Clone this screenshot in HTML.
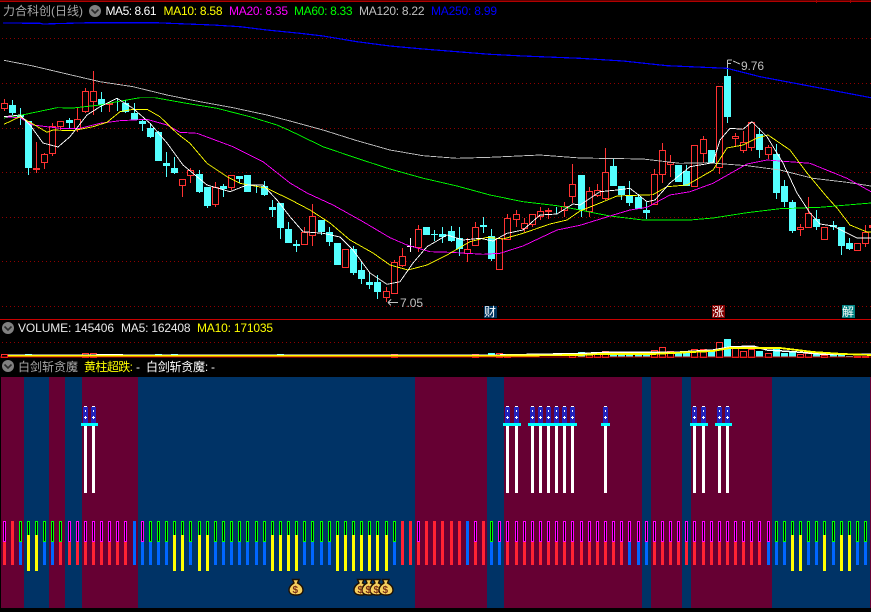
<!DOCTYPE html>
<html><head><meta charset="utf-8"><style>
html,body{margin:0;padding:0;background:#000;width:871px;height:612px;overflow:hidden}
svg{display:block}
text{font-family:"Liberation Sans","Noto Sans CJK SC",sans-serif;font-size:12px}
</style></head><body>
<svg width="871" height="612" viewBox="0 0 871 612" xmlns="http://www.w3.org/2000/svg" shape-rendering="crispEdges">
<rect width="871" height="612" fill="#000"/>
<rect y="0" width="871" height="1" fill="#600000"/><rect y="1" width="871" height="1" fill="#b00000"/>
<path d="M816.5 0V3M850.5 0V3" stroke="#a00000"/>
<rect y="319" width="871" height="1" fill="#c80000"/>
<path d="M2 38.5H871M2 83.5H871M2 128.5H871M2 172.5H871M2 217.5H871M2 261.5H871M2 306.5H871M2 342.5H871" stroke="#900000" stroke-dasharray="1 3"/>

<!-- candles red -->
<path stroke="#ff3232" d="M4.5 99V111M36.5 142V173M44.5 153V169M52.5 123V156M60.5 121V130M77.5 107V132M85.5 88V113M93.5 71V115M109.5 103V112M182.5 179V197M190.5 168V183M215.5 182V207M231.5 175V190M304.5 227V244M312.5 204V246M345.5 249V267M386.5 287V302M394.5 260V293M402.5 248V267M418.5 225V252M467.5 238V262M475.5 222V245M499.5 237V269M507.5 214V239M516.5 210V227M524.5 218V232M532.5 214V227M540.5 207V220M548.5 208V219M564.5 202V217M572.5 164V203M589.5 187V217M597.5 184V197M605.5 148V200M654.5 169V204M662.5 143V183M670.5 155V177M694.5 145V187M703.5 136V163M719.5 86V174M735.5 133V147M743.5 131V153M751.5 122V151M768.5 145V159M800.5 224V236M808.5 197V227M824.5 227V239M857.5 243V250M865.5 225V247"/>
<path fill="#000" stroke="#ff3232" d="M1.5 103.5h6v5h-6zM41.5 154.5h6v8h-6zM49.5 126.5h6v27h-6zM57.5 121.5h6v5h-6zM74.5 119.5h6v9h-6zM82.5 91.5h6v20h-6zM90.5 91.5h6v10h-6zM179.5 179.5h6v6h-6zM187.5 170.5h6v5h-6zM212.5 187.5h6v17h-6zM228.5 175.5h6v12h-6zM301.5 232.5h6v12h-6zM309.5 216.5h6v19h-6zM342.5 249.5h6v18h-6zM383.5 291.5h6v6h-6zM391.5 262.5h6v31h-6zM399.5 256.5h6v9h-6zM415.5 229.5h6v18h-6zM464.5 249.5h6v4h-6zM472.5 227.5h6v18h-6zM496.5 238.5h6v31h-6zM504.5 218.5h6v21h-6zM513.5 214.5h6v5h-6zM521.5 223.5h6v5h-6zM529.5 214.5h6v10h-6zM537.5 211.5h6v5h-6zM561.5 206.5h6v4h-6zM569.5 184.5h6v12h-6zM586.5 191.5h6v20h-6zM594.5 190.5h6v5h-6zM602.5 172.5h6v26h-6zM651.5 174.5h6v30h-6zM659.5 150.5h6v24h-6zM667.5 162.5h6v2h-6zM691.5 145.5h6v41h-6zM700.5 139.5h6v14h-6zM716.5 86.5h6v81h-6zM732.5 136.5h6v2h-6zM740.5 142.5h6v8h-6zM748.5 122.5h6v25h-6zM765.5 147.5h6v7h-6zM797.5 227.5h6v2h-6zM805.5 213.5h6v14h-6zM821.5 227.5h6v12h-6zM854.5 243.5h6v7h-6zM862.5 232.5h6v11h-6z"/>
<path fill="#ff3232" d="M33 168h7v2h-7zM106 103h7v2h-7zM545 210h7v2h-7zM869 225h2v3h-2z"/>
<!-- candles cyan -->
<path stroke="#54ffff" d="M12.5 100V115M20.5 108V125M28.5 121V175M69.5 118V129M101.5 92V112M117.5 99V111M125.5 100V113M134.5 103V120M142.5 120V131M150.5 123V138M158.5 131V161M166.5 152V177M174.5 157V174M199.5 170V193M207.5 187V208M223.5 184V197M239.5 176V183M256.5 185V193M264.5 181V196M272.5 200V217M280.5 203V239M288.5 222V243M296.5 240V252M321.5 220V235M329.5 227V246M353.5 246V275M361.5 262V284M369.5 273V289M377.5 275V299M434.5 230V241M442.5 227V243M451.5 226V242M459.5 227V256M483.5 217V233M491.5 229V261M556.5 207V214M581.5 175V217M613.5 159V186M621.5 186V200M629.5 181V206M638.5 194V209M646.5 202V219M686.5 165V186M727.5 60V123M759.5 128V158M776.5 144V199M784.5 180V207M792.5 200V233M816.5 210V230M833.5 221V230M841.5 227V255M849.5 238V250"/>
<path stroke="#fff" d="M410.5 238V252M407 246.5H414"/>
<path fill="#54ffff" d="M9 105h7v8h-7zM17 115h7v2h-7zM25 121h7v47h-7zM66 120h7v3h-7zM98 99h7v6h-7zM122 103h7v9h-7zM131 113h7v7h-7zM139 121h7v3h-7zM147 128h7v9h-7zM155 132h7v29h-7zM163 163h7v3h-7zM171 168h7v5h-7zM196 174h7v18h-7zM204 187h7v19h-7zM220 186h7v3h-7zM236 176h7v3h-7zM244 175h7v17h-7zM261 186h7v9h-7zM269 207h7v3h-7zM277 203h7v25h-7zM285 229h7v14h-7zM293 244h7v2h-7zM318 220h7v12h-7zM326 232h7v10h-7zM334 243h7v22h-7zM350 249h7v24h-7zM358 270h7v9h-7zM366 282h7v3h-7zM374 282h7v10h-7zM423 227h7v8h-7zM431 234h7v1h-7zM439 234h7v3h-7zM448 231h7v10h-7zM456 238h7v11h-7zM480 225h7v2h-7zM488 236h7v23h-7zM578 175h7v35h-7zM610 166h7v20h-7zM618 186h7v9h-7zM626 196h7v7h-7zM635 197h7v12h-7zM643 210h7v3h-7zM675 165h7v17h-7zM683 171h7v15h-7zM708 150h7v13h-7zM724 76h7v41h-7zM756 134h7v16h-7zM773 154h7v39h-7zM781 186h7v16h-7zM789 202h7v29h-7zM813 219h7v8h-7zM830 225h7v2h-7zM838 227h7v19h-7zM846 243h7v6h-7z"/>

<!-- moving averages -->
<g fill="none" stroke-width="0.9">
<polyline stroke="#0000ff" stroke-width="1.2" points="3,23 40,23.3 43,24 90,22.7 155,22.7 187,24 213,25 240,26.7 267,30 290,32.3 300,33.3 323,36 357,41.7 390,46 423,49 457,51.7 490,54.3 523,56 580,58.3 623,61 667,65.7 727,68.3 760,76.7 813,86.7 871,97.7"/>
<polyline stroke="#c0c0c0" points="4,60.3 33,66 67,74 100,81.7 133,86.7 167,95 200,101.7 233,107.7 267,115 290,121 323,130 357,140.7 390,150 423,155.7 457,158.3 490,157.3 540,155 580,158 643,159 680,163.3 707,162.7 747,165.7 780,170 813,178.3 847,182.3 871,186"/>
<polyline stroke="#00ff00" points="4,118 27,114 57,107.7 73,108 100,105 117,101.7 140,97.7 155,97.7 183,102.7 217,108.3 250,116.7 277,125 290,130.7 323,146.7 357,158.3 390,169 423,178.2 457,186 490,195 523,201.7 557,205.7 580,210 593,212.7 610,216 643,220 690,220 713,218 747,212.7 780,208.7 820,207.3 871,203"/>
<polyline stroke="#ff00ff" points="4,116.7 20,117.7 33,125 60,128.3 80,128.3 100,123.3 120,120.7 147,119.3 167,125 180,132.3 197,133.3 233,146.7 263,161.7 290,183 307,193 333,205 363,221.7 390,237.7 407,245 430,251.7 450,252.3 483,254.3 500,253.3 523,246 557,230 580,225.3 610,216 630,210 647,207.3 670,195 690,191.7 713,183.3 747,164 767,160 810,163.3 847,178.3 871,191.7"/>
<polyline stroke="#ffff00" points="4,124.3 20,116.7 33,124 47,132.3 53,130 73,130.7 93,126.7 107,122.3 120,111.7 133,109.3 147,109.3 160,116.7 177,133.3 190,143.3 207,163.3 227,176.7 240,183.3 267,188.3 290,199.5 310,210 330,223 350,240 373,253 390,265 408,270 427,265 447,255 470,241.7 487,237.3 503,239 523,233.3 550,224 567,220 580,211 600,203 617,196 653,194.7 667,186.7 687,185 713,170 727,148 743,145 757,138 768,135 790,150 807,173 827,197 837,208 850,225 867,232 871,232"/>
<polyline stroke="#ffffff" points="4,116.7 20,115 30,125 43,143 58,147 70,136.7 87,115 100,106.7 117,98.3 133,108.3 150,123.3 167,143 183,165 207,185 230,191.7 247,185 263,185 277,200 290,216.7 303,231.7 323,233.3 340,237 353,250 370,273 387,284.3 400,281.7 413,263 427,246.7 447,235 463,240 480,238.3 493,241 507,233.3 523,230 540,215 557,214 573,204 580,205 600,191.7 617,190 630,188.3 647,201.7 655,200 670,183 690,166.7 713,162.7 720,140 730,128.3 743,129.3 752,121.7 767,136.7 783,163 797,193 810,213 820,224 833,226 847,233 857,238 871,238"/>
</g>

<!-- price labels -->
<path stroke="#c0c0c0" fill="none" d="M388 302.5H398M388 302.5L391 299.5M388 302.5L391 305.5"/>
<text x="400" y="307" fill="#c0c0c0" textLength="23">7.05</text>
<path stroke="#c0c0c0" fill="none" d="M727.5 60V68M727.5 60H732M727.5 63.5H731M733 61L740 64"/>
<text x="741" y="70" fill="#c0c0c0" textLength="23">9.76</text>

<!-- badges -->
<rect x="484" y="306" width="13" height="12" fill="#00345f"/><text x="484" y="316" fill="#fff" textLength="13">财</text>
<rect x="712" y="305" width="13" height="13" fill="#800000"/><text x="712" y="316" fill="#fff" textLength="13">涨</text>
<rect x="842" y="305" width="13" height="13" fill="#008080"/><text x="842" y="316" fill="#fff" textLength="13">解</text>

<!-- header row 1 -->
<text x="3" y="15" fill="#a8a8a8" textLength="80">力合科创(日线)</text>
<g shape-rendering="auto"><circle cx="95" cy="11" r="6" fill="#808080"/><path d="M91.5 9.5L95 13L98.5 9.5" fill="none" stroke="#2a2a2a" stroke-width="1.6"/></g>
<text x="105.5" y="15" fill="#fff" textLength="51">MA5: 8.61</text>
<text x="163.5" y="15" fill="#ffff00" textLength="59">MA10: 8.58</text>
<text x="229" y="15" fill="#ff00ff" textLength="59">MA20: 8.35</text>
<text x="294" y="15" fill="#00ff00" textLength="58.5">MA60: 8.33</text>
<text x="359" y="15" fill="#c0c0c0" textLength="65.5">MA120: 8.22</text>
<text x="431" y="15" fill="#0000ff" textLength="66">MA250: 8.99</text>

<!-- volume panel -->
<g shape-rendering="auto"><circle cx="8" cy="328" r="6" fill="#808080"/><path d="M4.5 326.5L8 330L11.5 326.5" fill="none" stroke="#2a2a2a" stroke-width="1.6"/></g>
<text x="18" y="332" fill="#e8e8e8" textLength="96">VOLUME: 145406</text>
<text x="121" y="332" fill="#e8e8e8" textLength="69.5">MA5: 162408</text>
<text x="197" y="332" fill="#ffff00" textLength="76">MA10: 171035</text>
<path fill="#54ffff" d="M25 354h7v3h-7zM131 355h7v2h-7zM155 354h7v3h-7zM171 354h7v3h-7zM196 355h7v2h-7zM277 354h7v3h-7zM334 355h7v2h-7zM423 355h7v2h-7zM456 355h7v2h-7zM488 353h7v4h-7zM578 352h7v5h-7zM610 352h7v5h-7zM618 354h7v3h-7zM626 354h7v3h-7zM635 355h7v2h-7zM643 355h7v2h-7zM675 352h7v5h-7zM683 352h7v5h-7zM708 351h7v6h-7zM724 339h7v18h-7zM756 351h7v6h-7zM773 348h7v9h-7zM781 353h7v4h-7zM789 352h7v5h-7zM813 353h7v4h-7zM830 355h7v2h-7zM838 355h7v2h-7zM846 356h7v1h-7z"/>
<path fill="none" stroke="#ff3232" d="M1.5 354.5h6v3h-6zM82.5 353.5h6v4h-6zM90.5 353.5h6v4h-6zM391.5 354.5h6v3h-6zM472.5 354.5h6v3h-6zM496.5 353.5h6v4h-6zM504.5 354.5h6v3h-6zM569.5 353.5h6v4h-6zM586.5 354.5h6v3h-6zM594.5 354.5h6v3h-6zM602.5 351.5h6v6h-6zM651.5 350.5h6v7h-6zM659.5 347.5h6v10h-6zM667.5 351.5h6v6h-6zM691.5 349.5h6v8h-6zM700.5 349.5h6v8h-6zM716.5 342.5h6v15h-6zM732.5 347.5h6v10h-6zM740.5 351.5h6v6h-6zM748.5 349.5h6v8h-6zM765.5 353.5h6v4h-6zM797.5 354.5h6v3h-6zM805.5 353.5h6v4h-6zM821.5 355.5h6v2h-6zM854.5 356.5h6v1h-6zM862.5 356.5h6v1h-6z"/>
<polyline fill="none" stroke="#ffffff" stroke-width="1.5" points="8,355 97,355 97,354.5 122,354.5 122,355 500,355 580,353.5 613,352 680,352 713,350 730,347 753,346 767,350 797,352 820,354 871,354"/>
<polyline fill="none" stroke="#ffff00" stroke-width="1.8" points="8,355.7 500,355.7 580,355 600,354 653,354 713,351 730,348 780,348 797,350 813,352 843,354 871,355"/>
<rect y="356.5" width="871" height="1.2" fill="#d00000"/>

<!-- indicator header -->
<g shape-rendering="auto"><circle cx="8" cy="366" r="6" fill="#808080"/><path d="M4.5 364.5L8 368L11.5 364.5" fill="none" stroke="#2a2a2a" stroke-width="1.6"/></g>
<text x="18" y="371" fill="#a8a8a8" textLength="60">白剑斩贪魔</text>
<text x="84" y="371" fill="#ffff00" textLength="49">黄柱超跌:</text>
<text x="136" y="371" fill="#fff">-</text>
<text x="146" y="371" fill="#fff" textLength="69">白剑斩贪魔: -</text>

<!-- indicator background -->
<rect x="1" y="377" width="870" height="231" fill="#003366"/>
<path fill="#660033" d="M1 377h23v231h-23zM49 377h16v231h-16zM82 377h56v231h-56zM415 377h72v231h-72zM504 377h138v231h-138zM651 377h31v231h-31zM691 377h81v231h-81zM870 377h1v231h-1z"/>

<!-- star pillars -->
<path fill="#2222bb" d="M83 407h5v16h-5zM91 407h5v16h-5zM505 407h5v16h-5zM514 407h5v16h-5zM530 407h5v16h-5zM538 407h5v16h-5zM546 407h5v16h-5zM554 407h5v16h-5zM562 407h5v16h-5zM570 407h5v16h-5zM603 407h5v16h-5zM692 407h5v16h-5zM701 407h5v16h-5zM717 407h5v16h-5zM725 407h5v16h-5z"/>
<path fill="#fff" d="M84 406h3v1h-3zM85 410h1v2h-1zM84 417h3v1h-3zM85 416h1v3h-1zM92 406h3v1h-3zM93 410h1v2h-1zM92 417h3v1h-3zM93 416h1v3h-1zM506 406h3v1h-3zM507 410h1v2h-1zM506 417h3v1h-3zM507 416h1v3h-1zM515 406h3v1h-3zM516 410h1v2h-1zM515 417h3v1h-3zM516 416h1v3h-1zM531 406h3v1h-3zM532 410h1v2h-1zM531 417h3v1h-3zM532 416h1v3h-1zM539 406h3v1h-3zM540 410h1v2h-1zM539 417h3v1h-3zM540 416h1v3h-1zM547 406h3v1h-3zM548 410h1v2h-1zM547 417h3v1h-3zM548 416h1v3h-1zM555 406h3v1h-3zM556 410h1v2h-1zM555 417h3v1h-3zM556 416h1v3h-1zM563 406h3v1h-3zM564 410h1v2h-1zM563 417h3v1h-3zM564 416h1v3h-1zM571 406h3v1h-3zM572 410h1v2h-1zM571 417h3v1h-3zM572 416h1v3h-1zM604 406h3v1h-3zM605 410h1v2h-1zM604 417h3v1h-3zM605 416h1v3h-1zM693 406h3v1h-3zM694 410h1v2h-1zM693 417h3v1h-3zM694 416h1v3h-1zM702 406h3v1h-3zM703 410h1v2h-1zM702 417h3v1h-3zM703 416h1v3h-1zM718 406h3v1h-3zM719 410h1v2h-1zM718 417h3v1h-3zM719 416h1v3h-1zM726 406h3v1h-3zM727 410h1v2h-1zM726 417h3v1h-3zM727 416h1v3h-1z"/>
<path fill="#00ffff" d="M81 423h17v3h-17zM503 423h18v3h-18zM528 423h49v3h-49zM601 423h9v3h-9zM690 423h18v3h-18zM715 423h17v3h-17z"/>
<path fill="#ffffff" d="M84 426h3v67h-3zM92 426h3v67h-3zM506 426h3v67h-3zM515 426h3v67h-3zM531 426h3v67h-3zM539 426h3v67h-3zM547 426h3v67h-3zM555 426h3v67h-3zM563 426h3v67h-3zM571 426h3v67h-3zM604 426h3v67h-3zM693 426h3v67h-3zM702 426h3v67h-3zM718 426h3v67h-3zM726 426h3v67h-3z"/>

<!-- lower bars -->
<path stroke="#ff2233" stroke-width="3" d="M4.5 541V565M60.5 541V565M69.5 541V565M77.5 541V565M85.5 541V565M93.5 541V565M101.5 541V565M109.5 541V565M117.5 541V565M125.5 541V565M418.5 541V565M475.5 541V565M507.5 541V565M516.5 541V565M524.5 541V565M532.5 541V565M540.5 541V565M548.5 541V565M556.5 541V565M564.5 541V565M572.5 541V565M581.5 541V565M589.5 541V565M597.5 541V565M605.5 541V565M613.5 541V565M621.5 541V565M654.5 541V565M662.5 541V565M670.5 541V565M678.5 541V565M686.5 541V565M694.5 541V565M703.5 541V565M711.5 541V565M719.5 541V565M727.5 541V565M735.5 541V565M743.5 541V565M751.5 541V565M759.5 541V565M12.5 521V565M402.5 521V565M410.5 521V565M426.5 521V565M434.5 521V565M442.5 521V565M451.5 521V565M459.5 521V565M483.5 521V565"/>
<path stroke="#0066ff" stroke-width="3" d="M20.5 541V565M44.5 541V565M52.5 541V565M142.5 541V565M150.5 541V565M158.5 541V565M166.5 541V565M190.5 541V565M215.5 541V565M223.5 541V565M231.5 541V565M239.5 541V565M247.5 541V565M256.5 541V565M264.5 541V565M304.5 541V565M312.5 541V565M321.5 541V565M329.5 541V565M394.5 541V565M491.5 541V565M499.5 541V565M629.5 541V565M638.5 541V565M646.5 541V565M768.5 541V565M776.5 541V565M784.5 541V565M808.5 541V565M816.5 541V565M833.5 541V565M857.5 541V565M865.5 541V565M134.5 521V565M467.5 521V565"/>
<path fill="#000" stroke="#ff00ff" d="M3.5 521.5h2v20h-2zM68.5 521.5h2v20h-2zM76.5 521.5h2v20h-2zM84.5 521.5h2v20h-2zM92.5 521.5h2v20h-2zM100.5 521.5h2v20h-2zM108.5 521.5h2v20h-2zM116.5 521.5h2v20h-2zM124.5 521.5h2v20h-2zM141.5 521.5h2v20h-2zM417.5 521.5h2v20h-2zM474.5 521.5h2v20h-2zM498.5 521.5h2v20h-2zM506.5 521.5h2v20h-2zM515.5 521.5h2v20h-2zM523.5 521.5h2v20h-2zM531.5 521.5h2v20h-2zM539.5 521.5h2v20h-2zM547.5 521.5h2v20h-2zM555.5 521.5h2v20h-2zM563.5 521.5h2v20h-2zM571.5 521.5h2v20h-2zM580.5 521.5h2v20h-2zM588.5 521.5h2v20h-2zM596.5 521.5h2v20h-2zM604.5 521.5h2v20h-2zM612.5 521.5h2v20h-2zM620.5 521.5h2v20h-2zM628.5 521.5h2v20h-2zM637.5 521.5h2v20h-2zM645.5 521.5h2v20h-2zM653.5 521.5h2v20h-2zM661.5 521.5h2v20h-2zM669.5 521.5h2v20h-2zM677.5 521.5h2v20h-2zM685.5 521.5h2v20h-2zM693.5 521.5h2v20h-2zM702.5 521.5h2v20h-2zM710.5 521.5h2v20h-2zM718.5 521.5h2v20h-2zM726.5 521.5h2v20h-2zM734.5 521.5h2v20h-2zM742.5 521.5h2v20h-2zM750.5 521.5h2v20h-2zM758.5 521.5h2v20h-2zM767.5 521.5h2v20h-2z"/>
<path fill="#000" stroke="#00ff00" d="M19.5 521.5h2v20h-2zM27.5 521.5h2v20h-2zM35.5 521.5h2v20h-2zM43.5 521.5h2v20h-2zM51.5 521.5h2v20h-2zM59.5 521.5h2v20h-2zM149.5 521.5h2v20h-2zM157.5 521.5h2v20h-2zM165.5 521.5h2v20h-2zM173.5 521.5h2v20h-2zM181.5 521.5h2v20h-2zM189.5 521.5h2v20h-2zM198.5 521.5h2v20h-2zM206.5 521.5h2v20h-2zM214.5 521.5h2v20h-2zM222.5 521.5h2v20h-2zM230.5 521.5h2v20h-2zM238.5 521.5h2v20h-2zM246.5 521.5h2v20h-2zM255.5 521.5h2v20h-2zM263.5 521.5h2v20h-2zM271.5 521.5h2v20h-2zM279.5 521.5h2v20h-2zM287.5 521.5h2v20h-2zM295.5 521.5h2v20h-2zM303.5 521.5h2v20h-2zM311.5 521.5h2v20h-2zM320.5 521.5h2v20h-2zM328.5 521.5h2v20h-2zM336.5 521.5h2v20h-2zM344.5 521.5h2v20h-2zM352.5 521.5h2v20h-2zM360.5 521.5h2v20h-2zM368.5 521.5h2v20h-2zM376.5 521.5h2v20h-2zM385.5 521.5h2v20h-2zM393.5 521.5h2v20h-2zM490.5 521.5h2v20h-2zM775.5 521.5h2v20h-2zM783.5 521.5h2v20h-2zM791.5 521.5h2v20h-2zM799.5 521.5h2v20h-2zM807.5 521.5h2v20h-2zM815.5 521.5h2v20h-2zM823.5 521.5h2v20h-2zM832.5 521.5h2v20h-2zM840.5 521.5h2v20h-2zM848.5 521.5h2v20h-2zM856.5 521.5h2v20h-2zM864.5 521.5h2v20h-2z"/>
<path stroke="#ffff00" stroke-width="3" d="M28.5 535V571M36.5 535V571M174.5 535V571M182.5 535V571M199.5 535V571M207.5 535V571M272.5 535V571M280.5 535V571M288.5 535V571M296.5 535V571M337.5 535V571M345.5 535V571M353.5 535V571M361.5 535V571M369.5 535V571M377.5 535V571M386.5 535V571M792.5 535V571M800.5 535V571M824.5 535V571M841.5 535V571M849.5 535V571"/>

<!-- money bags -->
<g shape-rendering="auto" stroke="#201000" stroke-width="1.4" fill="#f5cf5e">
<path d="M292.5 579.5h6.5l-1.5 3.5c3 1.5 5.5 4 5.5 7 0 3.5-3 5-7 5s-7-1.5-7-5c0-3 2.5-5.5 5-7z"/>
<path d="M357.5 579.5h6.5l-1.5 3.5c3 1.5 5.5 4 5.5 7 0 3.5-3 5-7 5s-7-1.5-7-5c0-3 2.5-5.5 5-7z"/>
<path d="M365.5 579.5h6.5l-1.5 3.5c3 1.5 5.5 4 5.5 7 0 3.5-3 5-7 5s-7-1.5-7-5c0-3 2.5-5.5 5-7z"/>
<path d="M373.5 579.5h6.5l-1.5 3.5c3 1.5 5.5 4 5.5 7 0 3.5-3 5-7 5s-7-1.5-7-5c0-3 2.5-5.5 5-7z"/>
<path d="M382.5 579.5h6.5l-1.5 3.5c3 1.5 5.5 4 5.5 7 0 3.5-3 5-7 5s-7-1.5-7-5c0-3 2.5-5.5 5-7z"/>
</g>
<g fill="#7a3018" style="font-weight:bold">
<text x="292.5" y="593" style="font-size:10px">$</text>
<text x="357.5" y="593" style="font-size:10px">$</text>
<text x="365.5" y="593" style="font-size:10px">$</text>
<text x="373.5" y="593" style="font-size:10px">$</text>
<text x="382.5" y="593" style="font-size:10px">$</text>
</g>
</svg>
</body></html>
